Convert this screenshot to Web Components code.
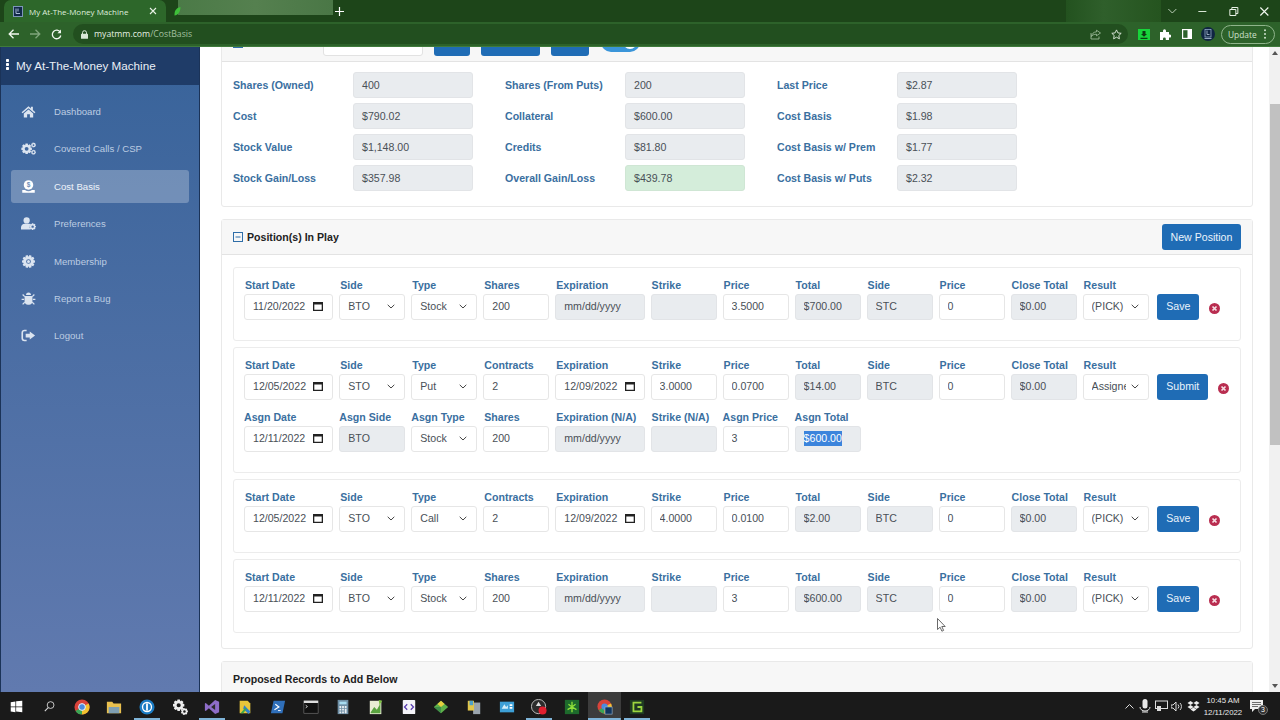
<!DOCTYPE html>
<html lang="en">
<head>
<meta charset="utf-8">
<title>My At-The-Money Machine</title>
<style>
  html, body { margin: 0; height: 100%; overflow: hidden; background: #fff; }
  body { font-family: "Liberation Sans", Arial, sans-serif; font-size: 10.6px; }
</style>
</head>
<body>
<app-shell>
  <browser-chrome slot="top"></browser-chrome>
  <side-nav slot="side">
    <nav-item icon="home">Dashboard</nav-item>
    <nav-item icon="cogs">Covered Calls / CSP</nav-item>
    <nav-item icon="money" active>Cost Basis</nav-item>
    <nav-item icon="usercog">Preferences</nav-item>
    <nav-item icon="badge">Membership</nav-item>
    <nav-item icon="bug">Report a Bug</nav-item>
    <nav-item icon="logout">Logout</nav-item>
  </side-nav>

  <clipped-header>
    <summary-toolbar></summary-toolbar>
    <stat-grid>
      <stat-field label="Shares (Owned)">400</stat-field>
      <stat-field label="Shares (From Puts)">200</stat-field>
      <stat-field label="Last Price">$2.87</stat-field>
      <stat-field label="Cost">$790.02</stat-field>
      <stat-field label="Collateral">$600.00</stat-field>
      <stat-field label="Cost Basis">$1.98</stat-field>
      <stat-field label="Stock Value">$1,148.00</stat-field>
      <stat-field label="Credits">$81.80</stat-field>
      <stat-field label="Cost Basis w/ Prem">$1.77</stat-field>
      <stat-field label="Stock Gain/Loss">$357.98</stat-field>
      <stat-field label="Overall Gain/Loss" good>$439.78</stat-field>
      <stat-field label="Cost Basis w/ Puts">$2.32</stat-field>
    </stat-grid>
  </clipped-header>

  <panel-card heading="Position(s) In Play" collapsible action="New Position">
    <trade-card>
      <trade-row>
        <trade-field label="Start Date" kind="date" wide>11/20/2022</trade-field>
        <trade-field label="Side" kind="select">BTO</trade-field>
        <trade-field label="Type" kind="select">Stock</trade-field>
        <trade-field label="Shares">200</trade-field>
        <trade-field label="Expiration" kind="off" wide>mm/dd/yyyy</trade-field>
        <trade-field label="Strike" kind="off"></trade-field>
        <trade-field label="Price">3.5000</trade-field>
        <trade-field label="Total" kind="off">$700.00</trade-field>
        <trade-field label="Side" kind="off">STC</trade-field>
        <trade-field label="Price">0</trade-field>
        <trade-field label="Close Total" kind="off">$0.00</trade-field>
        <trade-field label="Result" kind="select">(PICK)</trade-field>
        <row-actions>Save</row-actions>
      </trade-row>
    </trade-card>
    <trade-card>
      <trade-row>
        <trade-field label="Start Date" kind="date" wide>12/05/2022</trade-field>
        <trade-field label="Side" kind="select">STO</trade-field>
        <trade-field label="Type" kind="select">Put</trade-field>
        <trade-field label="Contracts">2</trade-field>
        <trade-field label="Expiration" kind="date" wide>12/09/2022</trade-field>
        <trade-field label="Strike">3.0000</trade-field>
        <trade-field label="Price">0.0700</trade-field>
        <trade-field label="Total" kind="off">$14.00</trade-field>
        <trade-field label="Side" kind="off">BTC</trade-field>
        <trade-field label="Price">0</trade-field>
        <trade-field label="Close Total" kind="off">$0.00</trade-field>
        <trade-field label="Result" kind="select">Assigned</trade-field>
        <row-actions>Submit</row-actions>
      </trade-row>
      <trade-row>
        <trade-field label="Asgn Date" kind="date" wide>12/11/2022</trade-field>
        <trade-field label="Asgn Side" kind="off">BTO</trade-field>
        <trade-field label="Asgn Type" kind="select">Stock</trade-field>
        <trade-field label="Shares">200</trade-field>
        <trade-field label="Expiration (N/A)" kind="off" wide>mm/dd/yyyy</trade-field>
        <trade-field label="Strike (N/A)" kind="off"></trade-field>
        <trade-field label="Asgn Price">3</trade-field>
        <trade-field label="Asgn Total" kind="off" selected>$600.00</trade-field>
      </trade-row>
    </trade-card>
    <trade-card>
      <trade-row>
        <trade-field label="Start Date" kind="date" wide>12/05/2022</trade-field>
        <trade-field label="Side" kind="select">STO</trade-field>
        <trade-field label="Type" kind="select">Call</trade-field>
        <trade-field label="Contracts">2</trade-field>
        <trade-field label="Expiration" kind="date" wide>12/09/2022</trade-field>
        <trade-field label="Strike">4.0000</trade-field>
        <trade-field label="Price">0.0100</trade-field>
        <trade-field label="Total" kind="off">$2.00</trade-field>
        <trade-field label="Side" kind="off">BTC</trade-field>
        <trade-field label="Price">0</trade-field>
        <trade-field label="Close Total" kind="off">$0.00</trade-field>
        <trade-field label="Result" kind="select">(PICK)</trade-field>
        <row-actions>Save</row-actions>
      </trade-row>
    </trade-card>
    <trade-card>
      <trade-row>
        <trade-field label="Start Date" kind="date" wide>12/11/2022</trade-field>
        <trade-field label="Side" kind="select">BTO</trade-field>
        <trade-field label="Type" kind="select">Stock</trade-field>
        <trade-field label="Shares">200</trade-field>
        <trade-field label="Expiration" kind="off" wide>mm/dd/yyyy</trade-field>
        <trade-field label="Strike" kind="off"></trade-field>
        <trade-field label="Price">3</trade-field>
        <trade-field label="Total" kind="off">$600.00</trade-field>
        <trade-field label="Side" kind="off">STC</trade-field>
        <trade-field label="Price">0</trade-field>
        <trade-field label="Close Total" kind="off">$0.00</trade-field>
        <trade-field label="Result" kind="select">(PICK)</trade-field>
        <row-actions>Save</row-actions>
      </trade-row>
    </trade-card>
  </panel-card>

  <panel-card heading="Proposed Records to Add Below"></panel-card>

  <task-bar slot="bottom"></task-bar>
  <mouse-cursor slot="over"></mouse-cursor>
</app-shell>

<script>
// Base: every element gets an open shadow root and renders once
class ShadowEl extends HTMLElement {
  constructor() {
    super();
    this.attachShadow({ mode: 'open' });
  }
  connectedCallback() {
    this.shadowRoot.innerHTML = this.render();
  }
}

// Gear outline, used by several sidebar and taskbar icons
function gear(cx, cy, r, teeth = 8) {
  let d = '';
  const outer = r, inner = r * 0.74, step = Math.PI * 2 / teeth;
  for (let i = 0; i < teeth; i++) {
    const a = i * step;
    const pts = [[inner, a - step * 0.5], [outer, a - step * 0.26], [outer, a + step * 0.26]];
    pts.forEach(([rad, ang], j) => {
      d += (i === 0 && j === 0 ? 'M' : 'L') + (cx + rad * Math.cos(ang)).toFixed(2) + ' ' + (cy + rad * Math.sin(ang)).toFixed(2);
    });
  }
  const h = r * 0.36;
  return d + `Z M${cx - h} ${cy}a${h} ${h} 0 1 0 ${h * 2} 0a${h} ${h} 0 1 0 ${-h * 2} 0Z`;
}

const NAV_ICONS = {
  home: `<path d="M12 3.5 1 13.2l1.5 1.7L12 6.6l9.5 8.3 1.5-1.7-4-3.5V4.5h-3.2v2.8z"/><path d="M12 8.6 4.5 15v6.5h5.3v-5h4.4v5h5.3V15z"/>`,
  cogs: `<path fill-rule="evenodd" d="${gear(9, 12.5, 8.6)}"/><path fill-rule="evenodd" d="${gear(20, 6.5, 4, 7)}"/><path fill-rule="evenodd" d="${gear(20, 18, 4, 7)}"/>`,
  money: `<circle cx="12" cy="9.5" r="7.6"/><path d="M2 17.5h4.4a9.5 9.5 0 0 0 11.2 0H22V22H2z"/><text x="12" y="13.2" font-size="10.5" font-weight="700" text-anchor="middle" fill="#6f8fb8" font-family="Liberation Sans">$</text>`,
  usercog: `<circle cx="9" cy="7" r="5"/><path d="M0 21.5v-3c0-3.6 3-6 6-6h6c1 0 2 .2 2.8.7a8 8 0 0 0 .2 8.3z"/><path fill-rule="evenodd" d="${gear(18.6, 17, 5.4, 8)}"/>`,
  badge: `<path fill-rule="evenodd" d="${gear(12, 12, 10.5, 10)}"/><circle cx="12" cy="12" r="2.4"/>`,
  bug: `<path d="M8 6.5a4 4 0 0 1 8 0z"/><path d="M6.7 8h10.6l1 1.3v7.4c0 3-2.4 5.3-5.3 5.3h-2c-2.9 0-5.3-2.3-5.3-5.3V9.3z"/><path d="M6 9 2.6 5.6M18 9l3.4-3.4M5 13.5H1M19 13.5h4M6 18l-3.4 3.4M18 18l3.4 3.4" stroke="currentColor" stroke-width="2" fill="none"/>`,
  logout: `<path d="M9 4H5.5A3.5 3.5 0 0 0 2 7.5v9A3.5 3.5 0 0 0 5.5 20H9" fill="none" stroke="currentColor" stroke-width="2.6"/><path d="M14 5.5 22.5 12 14 18.5V15H7.5V9H14z"/>`
};

class AppShell extends ShadowEl {
  render() {
    return `<style>
      :host { display: flex; flex-direction: column; width: 1280px; height: 720px; position: relative; overflow: hidden; color: #495057; }
      .middle { flex: 1; min-height: 0; display: flex; }
      .content { flex: 1; min-width: 0; display: flex; flex-direction: column; gap: 12px; overflow: hidden; padding: 0 16px 0 21px; }
      .content ::slotted(*) { flex-shrink: 0; }
      .content ::slotted(clipped-header) { margin-top: -22px; }
    </style>
    <slot name="top"></slot>
    <div class="middle">
      <slot name="side"></slot>
      <div class="content"><slot></slot></div>
      <page-scrollbar></page-scrollbar>
    </div>
    <slot name="bottom"></slot>
    <slot name="over"></slot>`;
  }
}

class BrowserChrome extends ShadowEl {
  render() {
    return `<style>
      :host { display: block; height: 47px; flex-shrink: 0; font-family: "Open Sans", "Liberation Sans", sans-serif; color: #e6f0e4; position: relative; z-index: 2; }
      .strip { height: 22px; display: flex; align-items: stretch; background: #1d4519; }
      .tab { width: 162px; margin: 0 0 0 4px; background: #2d672a; border-radius: 7px 7px 0 0; display: flex; align-items: center; padding: 0 9px; box-sizing: border-box; gap: 6px; font-size: 8px; white-space: nowrap; color: #dfeedd; }
      .tab .title { flex: 1; }
      .tab svg { flex: none; }
      .tab2 { display: flex; align-items: flex-start; width: 166px; padding-left: 8px; box-sizing: border-box; }
      .leaf { margin-top: 7px; flex-shrink: 0; position: relative; z-index: 1; }
      .blur { width: 155px; height: 15px; margin-left: -3px; flex: none; background: linear-gradient(90deg, #4b7a47, #55804f 50%, #4a7746); }
      .plus { width: 14px; display: flex; align-items: center; justify-content: center; }
      .spacer { flex: 1; }
      .blur2 { width: 95px; background: linear-gradient(90deg, #23521f, #2f5f2b 40%, #25541f); }
      .win { display: flex; align-items: center; margin-left: -4px; margin-right: .6px; }
      .win svg { width: 30.7px; height: 18px; flex: none; }
      .bar { height: 24px; background: #2d622a; display: flex; align-items: center; border-bottom: 1px solid #3f7a3b; box-sizing: content-box; }
      .nav { width: 21.5px; height: 24px; display: flex; align-items: center; justify-content: center; flex: none; }
      .nav.first { margin-left: 3px; }
      .url { width: 1055px; margin-left: 5.5px; height: 20px; box-sizing: border-box; flex: none; background: #224f1f; border-radius: 10px; display: flex; align-items: center; padding: 0 6px 0 8px; font-size: 8.7px; white-space: nowrap; }
      .url b { font-weight: 400; color: #e4efe2; margin-left: 6px; }
      .url i { font-style: normal; color: #a4c0a0; }
      .url .gap { flex: 1; }
      .url svg { margin-left: 10px; flex: none; }
      .url svg:first-child { margin: 0; }
      .ext { display: flex; align-items: center; margin-left: 10px; }
      .ext svg { flex: none; }
      .update { width: 54px; height: 19px; margin-left: 6px; border: 1px solid #8fb48b; border-radius: 10px; box-sizing: border-box; display: flex; align-items: center; justify-content: space-between; padding: 0 8px 0 6px; font-size: 8.4px; color: #cfe0cc; flex: none; }
    </style>
    <div class="strip">
      <div class="tab">
        <svg width="10" height="11" viewBox="0 0 10 11"><rect x=".5" y=".5" width="9" height="10" fill="#12294a" stroke="#7d96b8"/><path d="M3 2.500v5h4M5 2.500v3" stroke="#a9bdd6" fill="none"/></svg>
        <span class="title">My At-The-Money Machine</span>
        <svg width="8" height="8" viewBox="0 0 8 8"><path d="M1 1l6 6M7 1 1 7" stroke="#e8f2e6" stroke-width="1.1"/></svg>
      </div>
      <div class="tab2">
        <svg class="leaf" width="7" height="9" viewBox="0 0 7 9"><path d="M6.500 0C2 1 .2 4 .5 8.500 4 8 6.500 5 6.500 0z" fill="#3fbf3a"/></svg>
        <span class="blur"></span>
      </div>
      <div class="plus"><svg width="9" height="9" viewBox="0 0 9 9"><path d="M4.500 0v9M0 4.500h9" stroke="#fff" stroke-width="1.200"/></svg></div>
      <div class="spacer"></div>
      <div class="blur2"></div>
      <div class="win">
        <svg viewBox="0 0 30 18"><path d="M11 7l4 4 4-4" stroke="#b9cdb6" fill="none"/></svg>
        <svg viewBox="0 0 30 18"><path d="M11 9.500h8" stroke="#d8e6d6"/></svg>
        <svg viewBox="0 0 30 18"><path d="M11.500 7.500h6v6h-6zM13.500 7.500v-2h6v6h-2" stroke="#e8f2e6" fill="none"/></svg>
        <svg viewBox="0 0 30 18"><path d="M11 5.500l8 8M19 5.500l-8 8" stroke="#f2f8f0" stroke-width="1.100"/></svg>
      </div>
    </div>
    <div class="bar">
      <span class="nav first"><svg width="11" height="10" viewBox="0 0 11 10"><path d="M5.500.7 1.200 5l4.300 4.300M1.200 5H11" stroke="#f2f8f0" stroke-width="1.300" fill="none"/></svg></span>
      <span class="nav"><svg width="11" height="10" viewBox="0 0 11 10"><path d="M5.500.7 9.800 5 5.500 9.300M9.800 5H0" stroke="#7fa57b" stroke-width="1.300" fill="none"/></svg></span>
      <span class="nav"><svg width="11" height="11" viewBox="0 0 11 11"><path d="M9.300 3.200A4.300 4.300 0 1 0 9.800 6.500" stroke="#f2f8f0" stroke-width="1.300" fill="none"/><path d="M10 .6v3.600H6.400z" fill="#f2f8f0"/></svg></span>
      <div class="url">
        <svg width="7" height="9" viewBox="0 0 7 9"><path d="M1.500 4V2.700a2 2 0 0 1 4 0V4" stroke="#d8e6d6" fill="none"/><rect y="3.800" width="7" height="5" rx=".6" fill="#d8e6d6"/></svg>
        <b>myatmm.com<i>/CostBasis</i></b>
        <span class="gap"></span>
        <svg width="11" height="11" viewBox="0 0 11 11"><path d="M6.500 1.200 10.500 4 6.500 6.800V5.200C4 5.200 2.500 6 1.500 7.500 1.800 4.800 3.500 3 6.500 2.800zM1 4v6h8V7.500" stroke="#a8c4a4" stroke-width=".8" fill="none"/></svg>
        <svg width="11" height="11" viewBox="0 0 11 11"><path d="M5.500.9 6.900 3.900 10.200 4.300 7.800 6.500 8.400 9.800 5.500 8.200 2.600 9.800 3.200 6.500.8 4.300 4.100 3.900z" stroke="#e4efe2" stroke-width=".9" fill="none"/></svg>
      </div>
      <div class="ext">
        <svg width="12" height="11" viewBox="0 0 12 11"><rect width="12" height="11" fill="#17d43a"/><path d="M4.500 2h3v3H9L6 7.800 3 5h1.500zM2.500 8.700h7V10h-7z" fill="#0d3d12"/></svg>
        <svg style="margin-left:10px" width="11" height="11" viewBox="0 0 11 11"><path d="M0 3h3V1.800a1.500 1.500 0 0 1 3 0V3h3v2.500h.7a1.500 1.500 0 0 1 0 3H9V11H5.800V9.800a1.400 1.400 0 0 0-2.800 0V11H0z" fill="#fff"/></svg>
        <svg style="margin-left:11px" width="10" height="10" viewBox="0 0 10 10"><rect x=".6" y=".6" width="8.800" height="8.800" fill="none" stroke="#fff" stroke-width="1.200"/><rect x="5.500" y=".6" width="3.900" height="8.800" fill="#fff"/></svg>
        <svg style="margin-left:9px" width="14" height="14" viewBox="0 0 14 14"><circle cx="7" cy="7" r="7" fill="#102542"/><rect x="4" y="2.500" width="6" height="7.500" fill="none" stroke="#8ea6c4" stroke-width=".8"/><path d="M6 3.500v4h2.500M3.500 11.500h7" stroke="#b6c7dc" stroke-width=".8" fill="none"/></svg>
        <span class="update">Update<svg width="2" height="10" viewBox="0 0 2 10"><circle cx="1" cy="1.200" r="1" fill="#cfe0cc"/><circle cx="1" cy="5" r="1" fill="#cfe0cc"/><circle cx="1" cy="8.800" r="1" fill="#cfe0cc"/></svg></span>
      </div>
    </div>`;
  }
}

class SideNav extends ShadowEl {
  render() {
    return `<style>
      :host { display: flex; flex-direction: column; width: 200px; flex-shrink: 0; box-sizing: border-box; border-left: 1px solid #1b3358; border-right: 1px solid #1b3358; background: linear-gradient(180deg, #38639a 0%, #617aaf 100%); }
      .brand { height: 38px; flex-shrink: 0; background: #1f3c68; display: flex; align-items: center; padding-left: 5px; gap: 7px; color: #e9eff7; font-size: 11.7px; white-space: nowrap; }
      .brand svg { flex-shrink: 0; margin-top: -4px; }
      .brand span { margin-top: -1px; }
      .items { display: flex; flex-direction: column; padding: 10px 10px 0; gap: 4.4px; }
    </style>
    <div class="brand">
      <svg width="3" height="11" viewBox="0 0 3 11"><rect width="3" height="3" rx=".8" fill="#fff"/><rect y="4" width="3" height="3" rx=".8" fill="#fff"/><rect y="8" width="3" height="3" rx=".8" fill="#fff"/></svg>
      <span>My At-The-Money Machine</span>
    </div>
    <div class="items"><slot></slot></div>`;
  }
}

class NavItem extends ShadowEl {
  render() {
    const on = this.hasAttribute('active');
    return `<style>
      :host { display: flex; align-items: center; height: 33px; border-radius: 3px; padding-left: 10px; font-size: 9.6px; white-space: nowrap; color: ${on ? '#eef3fa' : '#bccce2'}; background: ${on ? 'rgba(255,255,255,.26)' : 'none'}; }
      svg { width: 15px; height: 15px; fill: ${on ? '#fff' : '#dbe4f0'}; color: ${on ? '#fff' : '#dbe4f0'}; margin-right: 18px; flex-shrink: 0; }
    </style>
    <svg viewBox="0 0 24 24" aria-hidden="true">${NAV_ICONS[this.getAttribute('icon')]}</svg><slot></slot>`;
  }
}

// Top summary card: its header is scrolled mostly out of view
class ClippedHeader extends ShadowEl {
  render() {
    return `<style>
      :host { display: block; border: 1px solid #e9e9e9; border-radius: 3px; background: #fff; box-sizing: border-box; height: 182px; }
    </style><slot></slot>`;
  }
}

class SummaryToolbar extends ShadowEl {
  render() {
    return `<style>
      :host { display: flex; align-items: center; height: 36px; box-sizing: border-box; background: #f7f7f7; border-bottom: 1px solid #e3e3e3; padding-left: 11px; font-size: 10.6px; color: #222; white-space: nowrap; }
      .box { width: 10px; height: 10px; border: 1px solid #2f6ea8; box-sizing: border-box; margin: 0 4px 1px 0; flex-shrink: 0; }
      b { width: 76px; flex-shrink: 0; margin-bottom: 5px; }
      .input { width: 100px; height: 25px; background: #fff; border: 1px solid #e2e2e2; box-sizing: border-box; border-radius: 3px; margin-right: 11px; flex-shrink: 0; }
      .btn { height: 25px; background: #1f6cb5; border-radius: 3px; flex-shrink: 0; }
      .toggle { width: 39px; height: 20px; margin: -3px 6px 0 12px; border-radius: 10px; background: #3a95d9; flex-shrink: 0; display: flex; justify-content: flex-end; align-items: center; padding-right: 3px; box-sizing: border-box; }
      .toggle i { width: 14px; height: 14px; background: #fff; border-radius: 50%; }
      .note { color: #666; font-size: 10.6px; margin-bottom: 5px; }
    </style>
    <span class="box"></span><b>Summary</b><span class="input"></span>
    <span class="btn" style="width:36px;margin-right:11px"></span>
    <span class="btn" style="width:59px;margin-right:11px"></span>
    <span class="btn" style="width:38px"></span>
    <span class="toggle"><i></i></span><span class="note">Only</span>`;
  }
}

class StatGrid extends ShadowEl {
  render() {
    return `<style>
      :host { display: grid; grid-template-columns: repeat(3, 240px); column-gap: 32px; row-gap: 5px; padding: 10px 11px 16px; }
    </style><slot></slot>`;
  }
}

class StatField extends ShadowEl {
  render() {
    const good = this.hasAttribute('good');
    return `<style>
      :host { display: flex; align-items: center; font-size: 10.6px; }
      label { width: 120px; font-weight: 700; color: #3a6f9f; white-space: nowrap; }
      div { width: 120px; height: 26px; box-sizing: border-box; padding: 0 8px; display: flex; align-items: center; border-radius: 3px; border: 1px solid ${good ? '#cfe6d4' : '#e2e4e7'}; background: ${good ? '#d4edda' : '#e9ecef'}; color: #495057; }
    </style>
    <label>${this.getAttribute('label')}</label><div><slot></slot></div>`;
  }
}

class PanelCard extends ShadowEl {
  render() {
    const action = this.getAttribute('action');
    const box = this.hasAttribute('collapsible')
      ? `<svg width="10" height="10" viewBox="0 0 10 10"><rect x=".5" y=".5" width="9" height="9" fill="none" stroke="#2f6ea8"/><path d="M2.500 5h5" stroke="#2f6ea8"/></svg>` : '';
    return `<style>
      :host { display: block; border: 1px solid #e9e9e9; border-radius: 3px; background: #fff; }
      header { height: 35px; box-sizing: border-box; display: flex; align-items: center; gap: 4px; background: #f7f7f7; border-bottom: 1px solid #e3e3e3; padding: 0 11px; font-size: 10.6px; font-weight: 700; color: #222; white-space: nowrap; }
      span { flex: 1; }
      button { font: inherit; font-weight: 400; color: #eaf3fb; background: #1f6cb5; border: 0; height: 26px; width: 79px; border-radius: 3px; padding: 0; }
      .body { display: flex; flex-direction: column; gap: 6px; padding: 12px 11px 15px; }
    </style>
    <header>${box}<span>${this.getAttribute('heading')}</span>${action ? `<button>${action}</button>` : ''}</header>
    <div class="body"><slot></slot></div>`;
  }
}

class TradeCard extends ShadowEl {
  render() {
    return `<style>
      :host { display: flex; flex-direction: column; gap: 11px; box-sizing: border-box; border: 1px solid #ececec; border-radius: 3px; padding: 11px 10px 20px; }
    </style><slot></slot>`;
  }
}

class TradeRow extends ShadowEl {
  render() {
    return `<style>:host { display: flex; gap: 6px; align-items: flex-start; }</style><slot></slot>`;
  }
}

class TradeField extends ShadowEl {
  render() {
    const kind = this.getAttribute('kind') || 'text';
    const off = kind === 'off';
    const sel = this.hasAttribute('selected');
    const label = this.getAttribute('label');
    const trail = kind === 'date'
      ? `<svg width="10" height="10" viewBox="0 0 10 10" style="margin-right:9px;flex:none"><path d="M0 1h10v9H0z" fill="#222"/><path d="M1.300 3.400h7.400v5.300H1.300z" fill="#fff"/></svg>`
      : kind === 'select'
        ? `<svg width="8" height="5" viewBox="0 0 8 5" style="margin:0 9px 0 5px;flex:none"><path d="M.7.8 4 4 7.300.8" fill="none" stroke="#444" stroke-width="1"/></svg>` : '';
    return `<style>
      :host { display: block; flex: none; width: ${this.hasAttribute('wide') ? 89.3 : 66}px; font-size: 10.6px; }
      label { display: block; height: 15px; line-height: 13px; padding-left: ${label.startsWith('Asgn') ? 0 : 1}px; font-weight: 700; color: #3a6f9f; white-space: nowrap; }
      .ctl { height: 26px; box-sizing: border-box; display: flex; align-items: center; border-radius: 3px; border: 1px solid ${off ? '#e2e4e7' : '#e6e6e6'}; background: ${off ? '#e9ecef' : '#fff'}; color: #495057; padding: 0 0 2px 8px; overflow: hidden; }
      .val { flex: 1; min-width: 0; overflow: hidden; white-space: nowrap; }
      .val span { ${sel ? 'background:#3b84dc;color:#fff;display:inline-block;line-height:15px;' : ''} }
    </style>
    <label>${label}</label>
    <div class="ctl"><div class="val"><span><slot></slot></span></div>${trail}</div>`;
  }
}

class RowActions extends ShadowEl {
  render() {
    return `<style>
      :host { display: flex; align-items: center; margin: 15px 0 0 2.7px; height: 26px; gap: 10px; font-size: 10.6px; }
      .btn { height: 26px; box-sizing: border-box; padding: 0 9px 2px; border-radius: 3px; background: #1f6cb5; color: #eaf3fb; display: flex; align-items: center; white-space: nowrap; }
      svg { margin-top: 2px; flex: none; }
    </style>
    <span class="btn"><slot></slot></span>
    <svg width="11" height="11" viewBox="0 0 11 11"><circle cx="5.500" cy="5.500" r="5.500" fill="#b92d50"/><path d="M3.500 3.500l4 4M7.500 3.500l-4 4" stroke="#f6dfe4" stroke-width="1.700"/></svg>`;
  }
}

class PageScrollbar extends ShadowEl {
  render() {
    return `<style>
      :host { display: flex; flex-direction: column; align-items: center; width: 11px; flex-shrink: 0; background: #f1f1f1; }
      .up { margin-top: 4px; border: 3px solid transparent; border-top: 0; border-bottom: 4px solid #555; }
      .thumb { width: 10px; align-self: flex-end; height: 341px; margin-top: 49px; background: #c1c1c1; }
      .gap { flex: 1; }
      .down { margin-bottom: 4px; border: 3px solid transparent; border-bottom: 0; border-top: 4px solid #555; }
    </style>
    <span class="up"></span><span class="thumb"></span><span class="gap"></span><span class="down"></span>`;
  }
}

// Taskbar icons, left to right
const TASK_ICONS = [
  { size: 13, s: `<path d="M1 3l6.500-1v7H1zM8.500 1.900 17 1v8H8.500zM1 10h6.500v6.800L1 16zM8.500 10H17v7l-8.500-1.100z" fill="#fff"/>` },
  { size: 13, s: `<circle cx="10.500" cy="7" r="4.700" fill="none" stroke="#ddd" stroke-width="1.200"/><path d="M7.200 10.500 2.500 15.500" stroke="#ddd" stroke-width="1.400"/>` },
  { s: `<circle cx="9" cy="9" r="8.500" fill="#d9433a"/><path d="M9 9 1.700 13.500A8.500 8.500 0 0 0 9 17.500z" fill="#3aa655"/><path d="M9 9 9 17.500A8.500 8.500 0 0 0 16.500 5z" fill="#f2c230"/><circle cx="9" cy="9" r="3.800" fill="#4a8be0" stroke="#fff"/>` },
  { s: `<path d="M1 3h6l1.500 2H17v11H1z" fill="#e9c04e"/><rect x="3" y="9" width="12" height="7" fill="#7f9fb3"/>` },
  { s: `<circle cx="9" cy="9" r="8.500" fill="#1b7cc4"/><circle cx="9" cy="9" r="5.800" fill="#fff"/><circle cx="9" cy="9" r="4.300" fill="#1b7cc4"/><rect x="8" y="5" width="2" height="8" fill="#fff"/>`, active: 1 },
  { s: `<path fill-rule="evenodd" d="${gear(7.5, 7, 6.5)}" fill="#eee"/><path fill-rule="evenodd" d="${gear(14, 14, 4, 7)}" fill="#eee"/>` },
  { s: `<path d="M12.500 1 17 3v12l-4.500 2-7-6.500L2 13.500 1 13V5l1-.500 3.500 3z" fill="#8e6dc8"/><path d="M12.500 5.500v7L8 9z" fill="#2c2c2c"/>`, active: 1 },
  { s: `<path d="M3 2h9l3 3v11H3z" fill="#e8c53a"/><path d="M8 7l7 7-2 3-6-6z" fill="#2f7fd0"/><path d="M4 16l5-6 2 1-4 5z" fill="#3caa4a"/>` },
  { s: `<path d="M4 2h13l-3 14H1z" fill="#2f6fba"/><path d="M6 6l4 3-5 3" fill="none" stroke="#fff" stroke-width="1.300"/><path d="M9 13h3" stroke="#fff"/>` },
  { s: `<rect x="1" y="2" width="16" height="14" fill="#111" stroke="#888" stroke-width=".6"/><rect x="1" y="2" width="16" height="2.500" fill="#ddd"/><path d="M3 7l2 1.500L3 10" fill="none" stroke="#ddd"/>` },
  { s: `<rect x="3" y="1" width="12" height="16" fill="#6f8fa5"/><rect x="5" y="3" width="8" height="3" fill="#a7dcf0"/><path d="M5 8h2v2H5zM8 8h2v2H8zM11 8h2v2h-2zM5 11h2v2H5zM8 11h2v2H8zM11 11h2v5h-2zM5 14h2v2H5zM8 14h2v2H8z" fill="#e8eef2"/>` },
  { s: `<rect x="2" y="2" width="13" height="15" fill="#e9eed4"/><path d="M3 15l4-6 3 3 4-7v11H3z" fill="#59a33f"/><path d="M12 1l4 1-3 5z" fill="#7cc242"/>` },
  { s: `<rect x="2" y="1" width="14" height="16" rx="1" fill="#f4f4f8"/><path d="M7 6 4 9l3 3M11 6l3 3-3 3" fill="none" stroke="#5a3fb0" stroke-width="1.500"/>` },
  { s: `<path d="M9 2l8 7-8 7-8-7z" fill="#5db04a"/><path d="M9 2l4 3.500L9 9 5 5.500z" fill="#e6cf3f"/><path d="M1 9l8 7V9z" fill="#3f8f49"/>` },
  { s: `<rect x="8" y="4" width="8" height="13" fill="#9aa4ad"/><path d="M2 2h7v11H2z" fill="#e2c64a"/><path d="M4 2h4v5H4z" fill="#4da0c8"/>` },
  { s: `<rect x="1" y="3" width="16" height="12" fill="#3d9fd6"/><path d="M3 11l3-5 2 3 2-2v4z" fill="#d3eefa"/><path d="M12 6h3v2h-3zM12 9h3v2h-3z" fill="#fff"/>` },
  { s: `<circle cx="8.500" cy="8.500" r="8" fill="#2c2c2c" stroke="#ccc"/><path d="M8.500 3l3 5h-6z" fill="#ddd"/><circle cx="13" cy="13" r="4.500" fill="#e0202f"/>`, active: 1 },
  { s: `<rect x="1" y="1" width="16" height="16" fill="#1d6a2c"/><path d="M9 3v5M5 6l4 3 4-3M4 12l5-3 5 3M9 9v6" stroke="#8fe03a" stroke-width="1.500" fill="none"/>` },
  { s: `<circle cx="8.500" cy="8.500" r="8" fill="#d9433a"/><path d="M8.500 8.500 2 12.500A8 8 0 0 0 8.500 16.500z" fill="#3aa655"/><path d="M8.500 8.500V16.500A8 8 0 0 0 15.800 5z" fill="#f2c230"/><circle cx="8.500" cy="8.500" r="3.500" fill="#4a8be0"/><rect x="9" y="9" width="8" height="8" fill="#10355e" stroke="#9cb4cc" stroke-width=".7"/>`, active: 1, on: 1 },
  { s: `<rect x="1" y="1" width="16" height="16" fill="#1e3a22"/><path d="M14 4H5v10h9V9H9.500" fill="none" stroke="#9bd63e" stroke-width="2"/>`, active: 1 }
];

class TaskBar extends ShadowEl {
  render() {
    const icons = TASK_ICONS.map(t => {
      const size = t.size || 16;
      return `<span class="ti ${t.active ? 'act' : ''} ${t.on ? 'on' : ''}"><svg width="${size}" height="${size}" viewBox="0 0 18 18">${t.s}</svg></span>`;
    }).join('');
    return `<style>
      :host { display: flex; align-items: stretch; height: 28px; flex-shrink: 0; background: #1a1a1a; color: #e8e8e8; position: relative; z-index: 2; }
      .ti { width: 32.7px; display: flex; align-items: center; justify-content: center; padding-top: 1px; box-sizing: border-box; }
      .act { background: linear-gradient(#7fb4d8, #7fb4d8) center bottom / 26px 2px no-repeat; }
      .act.on { background: linear-gradient(#7fb4d8, #7fb4d8) center bottom / 100% 2px no-repeat, #3c3c3c; }
      .gap { flex: 1; }
      .tray { display: flex; align-items: center; gap: 3px; padding-right: 17px; }
      .tray svg { flex: none; display: block; }
      .clock { width: 44px; margin: 1px 2px 0 -1.5px; font-size: 7.8px; line-height: 12px; text-align: center; white-space: nowrap; }
      .note { position: relative; display: flex; }
      .note i { position: absolute; right: -5px; bottom: -3px; width: 10px; height: 10px; border-radius: 50%; background: #333; border: 1px solid #777; box-sizing: border-box; font: 7px/8px "Liberation Sans", sans-serif; text-align: center; color: #fff; }
    </style>
    ${icons}
    <span class="gap"></span>
    <div class="tray">
      <svg width="11" height="7" viewBox="0 0 11 7"><path d="M1.500 5.500 5.500 1.500 9.500 5.500" fill="none" stroke="#ddd"/></svg>
      <svg style="margin-left:1px" width="12" height="14" viewBox="0 0 12 14"><rect x="3.500" y="0" width="5" height="9.500" rx="2.500" fill="#e8e8e8"/><path d="M1 8a5 4 0 0 0 10 0M3 13h6" stroke="#e8e8e8" fill="none"/></svg>
      <svg style="margin-left:1px" width="13" height="12" viewBox="0 0 13 12"><rect x=".5" y="1" width="12" height="7.500" fill="none" stroke="#ddd"/><rect x="2" y="6" width="4" height="5" fill="#ddd"/></svg>
      <svg width="13" height="11" viewBox="0 0 13 11"><path d="M0 4h2l3-3v9L2 7H0z" fill="none" stroke="#ddd"/><path d="M7 3.500a3 3 0 0 1 0 4M9 2a5 5 0 0 1 0 7" fill="none" stroke="#ddd"/></svg>
      <svg width="13" height="11" viewBox="0 0 13 11"><path d="M3.500 0 6.500 2 3.500 4 .5 2zM9.500 0 12.500 2 9.500 4 6.500 2zM3.500 4 6.500 6 3.500 8 .5 6zM9.500 4 12.500 6 9.500 8 6.500 6zM3.500 8.500l3-2 3 2-3 2z" fill="#eee"/></svg>
      <div class="clock">10:45 AM<br>12/11/2022</div>
      <span class="note"><svg width="13" height="12" viewBox="0 0 13 12"><path d="M0 0h13v9H5L2 12V9H0z" fill="#eee"/><path d="M2 2.500h9M2 4.500h9M2 6.500h6" stroke="#333" stroke-width=".7"/></svg><i>3</i></span>
    </div>`;
  }
}

class MouseCursor extends ShadowEl {
  render() {
    return `<style>
      :host { position: absolute; left: 937px; top: 618px; width: 9px; height: 14px; }
      svg { display: block; }
    </style>
    <svg width="9" height="14" viewBox="0 0 9 14"><path d="M.5.500v11l2.600-2.300 1.800 4 1.700-.800-1.800-3.900h3.400z" fill="#fff" stroke="#444" stroke-width=".8"/></svg>`;
  }
}

customElements.define('app-shell', AppShell);
customElements.define('browser-chrome', BrowserChrome);
customElements.define('side-nav', SideNav);
customElements.define('nav-item', NavItem);
customElements.define('clipped-header', ClippedHeader);
customElements.define('summary-toolbar', SummaryToolbar);
customElements.define('stat-grid', StatGrid);
customElements.define('stat-field', StatField);
customElements.define('panel-card', PanelCard);
customElements.define('trade-card', TradeCard);
customElements.define('trade-row', TradeRow);
customElements.define('trade-field', TradeField);
customElements.define('row-actions', RowActions);
customElements.define('page-scrollbar', PageScrollbar);
customElements.define('task-bar', TaskBar);
customElements.define('mouse-cursor', MouseCursor);
</script>
</body>
</html>
